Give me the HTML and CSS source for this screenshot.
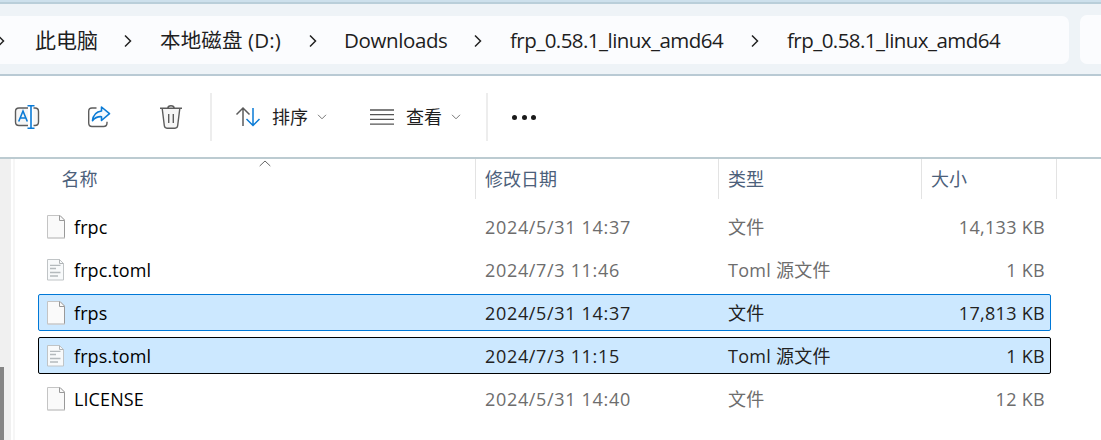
FILE: index.html
```html
<!DOCTYPE html>
<html lang="zh-CN">
<head>
<meta charset="utf-8">
<title>frp_0.58.1_linux_amd64</title>
<link rel="stylesheet" href="styles.css">
</head>
<body>
<svg width="0" height="0" class="defs">
  <symbol id="next" viewBox="0 0 8 14"><path d="M1 1.500 6.500 7 1 12.500" fill="none" stroke="#222" stroke-width="1.500"/></symbol>
  <symbol id="down" viewBox="0 0 10 6"><path d="M1 .8 5 4.800 9 .8" fill="none" stroke="#777" stroke-width="1"/></symbol>
  <symbol id="blank" viewBox="0 0 19 25">
    <path d="M.5 1.500H13L17.500 6V24H.5Z" fill="#fafafa" stroke="#c4c4c4"/>
    <path d="M.5 24H18" stroke="#cfcfcf" stroke-width="1.200"/>
    <path d="M12.500 1.500V6.500H17.500V23.500" fill="none" stroke="#999"/>
    <path d="M13 1.500 17.500 6" stroke="#aaa"/>
  </symbol>
  <symbol id="text" viewBox="0 0 18 23">
    <path d="M.5 1.500H12.500L16.500 5.500V22H.5Z" fill="#f8fafb" stroke="#c0c4c6"/>
    <path d="M12.500 1.500V5.500H16.500" fill="none" stroke="#b0b4b6"/>
    <path d="M3 7.300H13.500M3 10.500H9M3 14.500H13.500M3 18H11" stroke="#b4babd" stroke-width="1.300"/>
  </symbol>
</svg>
<div class="window">
  <header class="address-row">
    <nav class="address">
      <svg class="next n0"><use href="#next"/></svg>
      <span class="crumb c1">此电脑</span>
      <svg class="next"><use href="#next"/></svg>
      <span class="crumb c2">本地磁盘 (D:)</span>
      <svg class="next"><use href="#next"/></svg>
      <span class="crumb c3">Downloads</span>
      <svg class="next"><use href="#next"/></svg>
      <span class="crumb c4">frp_0.58.1_linux_amd64</span>
      <svg class="next"><use href="#next"/></svg>
      <span class="crumb c5">frp_0.58.1_linux_amd64</span>
    </nav>
    <div class="search"></div>
  </header>
  <div class="toolbar">
    <svg class="tool rename" viewBox="0 0 26 26" fill="none" stroke-width="1.400">
      <path d="M14 4H5Q1.500 4 1.500 7.500V18Q1.500 21.500 5 21.500H14M19.500 4H21Q24.500 4 24.500 7.500V18Q24.500 21.500 21 21.500H19.500" stroke="#5c5c5c" fill="#f6f6f6"/>
      <path d="M4.700 17.500 9 7 13.300 17.500M6.200 14H11.800M13.500 1.700H20.500M13.500 24.300H20.500M17 1.700V24.300" stroke="#0a7bd6" stroke-width="1.600"/>
    </svg>
    <svg class="tool share" viewBox="0 0 26 26" fill="none" stroke-width="1.400">
      <path d="M10.500 4H6Q2.700 4 2.700 7.500V19Q2.700 22.500 6 22.500H17.500Q21 22.500 21 19V17.800" stroke="#5c5c5c"/>
      <path d="M15.500 3 23.500 9.700 15.500 16.500V12.700Q10 12.300 6.500 16.700Q7.500 8 15.500 7Z" fill="#f2f8fd" stroke="#0a7bd6" stroke-width="1.600" stroke-linejoin="round"/>
    </svg>
    <svg class="tool trash" viewBox="0 0 26 26" fill="none" stroke="#5c5c5c" stroke-width="1.400">
      <path d="M4.200 4.500 6.300 21.500Q6.600 24.200 9 24.200H17Q19.400 24.200 19.700 21.500L21.800 4.500" fill="#f6f6f6"/><path d="M2 4.300H24M9.700 4.300Q10 1.800 13 1.800T16.300 4.300M10.700 10V19M15.300 10V19"/>
    </svg>
    <i class="divider d1"></i>
    <svg class="sort" viewBox="0 0 26 22" fill="none" stroke-width="1.500">
      <path d="M8 20V2M1.500 8.500 8 2 14.500 8.500" stroke="#5c5c5c"/>
      <path d="M18 2V19.500M11.500 13 18 19.500 24.500 13" stroke="#0a7bd6"/>
    </svg>
    <span class="label">排序</span>
    <svg class="down"><use href="#down"/></svg>
    <svg class="lines" viewBox="0 0 24 18"><path d="M0 2H24M0 6.700H24M0 11.400H24M0 16.100H24" stroke="#555" stroke-width="1.300"/></svg>
    <span class="label">查看</span>
    <svg class="down"><use href="#down"/></svg>
    <i class="divider d2"></i>
    <div class="more"><i></i><i></i><i></i></div>
  </div>
  <main class="body">
    <div class="tree-scroll"><div class="thumb"></div></div>
    <div class="pane-edge"></div>
    <section class="files">
      <div class="head">
        <span class="h-name">名称<svg class="asc" viewBox="0 0 12 7"><path d="M.7 6 6 1 11.300 6" fill="none" stroke="#666"/></svg></span>
        <span>修改日期</span><span>类型</span><span>大小</span>
      </div>
      <div class="row"><svg class="ico"><use href="#blank"/></svg><span class="name">frpc</span><span class="date">2024/5/31 14:37</span><span class="type">文件</span><span class="size">14,133 KB</span></div>
      <div class="row"><svg class="ico doc"><use href="#text"/></svg><span class="name">frpc.toml</span><span class="date">2024/7/3 11:46</span><span class="type">Toml 源文件</span><span class="size">1 KB</span></div>
      <div class="row selected"><svg class="ico"><use href="#blank"/></svg><span class="name">frps</span><span class="date">2024/5/31 14:37</span><span class="type">文件</span><span class="size">17,813 KB</span></div>
      <div class="row selected focus"><svg class="ico doc"><use href="#text"/></svg><span class="name">frps.toml</span><span class="date">2024/7/3 11:15</span><span class="type">Toml 源文件</span><span class="size">1 KB</span></div>
      <div class="row"><svg class="ico"><use href="#blank"/></svg><span class="name">LICENSE</span><span class="date">2024/5/31 14:40</span><span class="type">文件</span><span class="size">12 KB</span></div>
    </section>
  </main>
</div>
</body>
</html>
```
FILE: styles.css
```css
* { box-sizing: border-box; }
body { margin: 0; overflow: hidden; background: #fff; font-family: "Open Sans", "Noto Sans CJK SC", sans-serif; }
svg { display: block; flex: none; }
.defs { position: absolute; }
.window { width: 1101px; height: 440px; display: flex; flex-direction: column; }
.address-row { height: 76px; flex: none; display: flex; gap: 11px; padding-top: 13px; background: #eef3f7; border-top: 2px solid #cde0ec; border-bottom: 2px solid #b9cad4; box-shadow: inset 0 2px #b9ced9; }
.address { width: 1069px; height: 48px; margin-top: 1px; display: flex; align-items: center; background: #fbfcfe; border-radius: 0 7px 7px 0; font-size: 20.500px; line-height: 48px; color: #1e1e1e; }
.search { flex: 1; height: 49px; background: #fbfcfe; border-radius: 7px 0 0 7px; }
.next { width: 8px; height: 14px; margin-top: 2px; }
.n0 { margin-left: -3px; }
.crumb { white-space: nowrap; flex: none; }
.c1 { width: 89px; margin-left: 30px; font-size: 21px; }
.c2 { width: 149px; margin-left: 28px; letter-spacing: .13px; }
.c3 { width: 130px; margin-left: 27px; letter-spacing: -.38px; }
.c4 { width: 241px; margin-left: 28px; letter-spacing: -.54px; }
.c5 { margin-left: 28px; letter-spacing: -.54px; }
.toolbar { height: 83px; flex: none; display: flex; align-items: center; padding-left: 14px; border-bottom: 2px solid #bccbd1; font-size: 18px; color: #1e1e1e; }
.tool { width: 26px; height: 26px; margin-right: 46px; }
.trash { margin-right: 26px; }
.divider { width: 2px; height: 48px; background: #ededed; flex: none; }
.sort { width: 26px; height: 22px; margin-left: 23px; margin-right: 11px; }
.label { width: 36px; white-space: nowrap; padding-bottom: 1px; }
.down { width: 10px; height: 6px; margin-left: 9px; }
.lines { width: 24px; height: 18px; margin-left: 43px; margin-right: 12px; }
.d2 { margin-left: 25px; }
.more { margin-left: 24px; display: flex; gap: 4.500px; padding-top: 1px; }
.more i { width: 5px; height: 5px; border-radius: 50%; background: #1a1a1a; }
.body { flex: 1; display: flex; }
.tree-scroll { width: 11px; background: #f0f0f0; padding-top: 208px; }
.thumb { width: 4px; height: 73px; background: #858585; }
.pane-edge { width: 2px; margin-left: 2px; background: #f6f6f6; }
.files { width: 1036px; margin-left: 23px; font-size: 18px; }
.head { height: 40px; display: grid; grid-template-columns: 438px 243px 203px 135px; margin-bottom: 9px; color: #4c607a; line-height: 40px; }
.head span { border-right: 1px solid #e3e3e3; padding-left: 9px; }
.head .h-name { position: relative; padding-left: 23.500px; }
.asc { position: absolute; left: 220.500px; top: 1px; width: 12px; height: 7px; }
.row { width: 1013px; height: 37px; margin-bottom: 6px; display: grid; grid-template-columns: 27px 411px 243px 192px 1fr; align-items: center; border: 1px solid transparent; border-radius: 2px; padding: 0 5px 0 8px; color: #6d6d6d; line-height: 34px; white-space: nowrap; }
.selected { background: #cce8ff; border-color: #0078d7; color: #222; }
.focus { border-color: #000; }
.ico { width: 19px; height: 25px; }
.doc { width: 18px; height: 23px; }
.name { color: #000; letter-spacing: .1px; }
.date { letter-spacing: .67px; }
.type { letter-spacing: .25px; }
.size { text-align: right; letter-spacing: .3px; }
```
